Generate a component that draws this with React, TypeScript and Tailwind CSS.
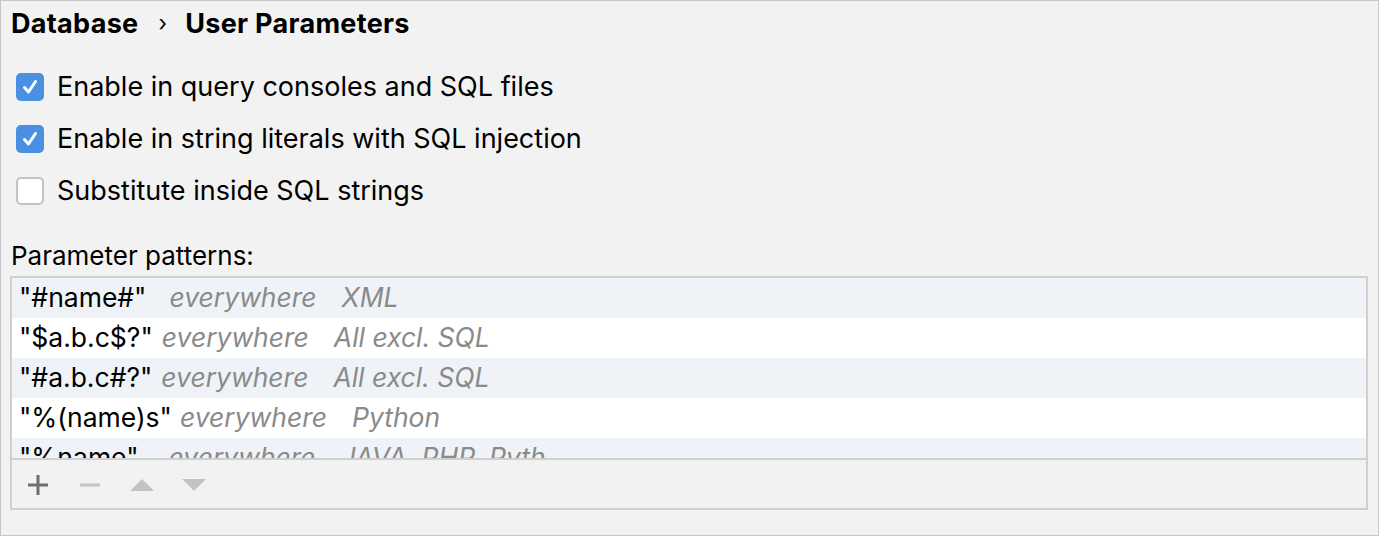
import React from "react";

const rows = [
  { p: '"#name#"', gap: "ml-[23px]", s: "everywhere", l: "XML" },
  { p: '"$a.b.c$?"', gap: "ml-[9px]", s: "everywhere", l: "All excl. SQL" },
  { p: '"#a.b.c#?"', gap: "ml-[9px]", s: "everywhere", l: "All excl. SQL" },
  { p: '"%(name)s"', gap: "ml-[8px]", s: "everywhere", l: "Python" },
  { p: '"%name"', gap: "ml-[30px]", s: "everywhere", l: "JAVA, PHP, Pyth" },
];

function Check({ checked }: { checked: boolean }) {
  if (checked) {
    return (
      <div className="w-[28px] h-[28px] rounded-[5px] bg-[#4a90e2] flex items-center justify-center shrink-0">
        <svg width="18" height="18" viewBox="0 0 18 18">
          <path d="M3.5 9.5 L7.5 14 L14.5 3.5" fill="none" stroke="white" strokeWidth="3" strokeLinecap="round" strokeLinejoin="round" />
        </svg>
      </div>
    );
  }
  return <div className="w-[28px] h-[28px] rounded-[5px] bg-white border-2 border-[#c2c2c2] shrink-0" />;
}

export default function App() {
  return (
    <div
      className="w-[1379px] h-[536px] bg-[#f2f2f2] border border-[#c6c6c6] text-black overflow-hidden"
      style={{ fontFamily: "Inter, 'Noto Sans', sans-serif" }}
    >
      <div className="pl-[10px] pt-[8px] h-[36px] flex items-center text-[27px] font-bold leading-none tracking-[0.3px]">
        <span>Database</span>
        <span className="ml-[20px] mr-[18px] font-normal text-[22px]">›</span>
        <span>User Parameters</span>
      </div>
      <div className="pl-[15px] pt-[36px] flex flex-col gap-[24px] text-[27px] leading-[28px]">
        <div className="flex items-center gap-[13px]">
          <Check checked />
          <span>Enable in query consoles and SQL files</span>
        </div>
        <div className="flex items-center gap-[13px]">
          <Check checked />
          <span>Enable in string literals with SQL injection</span>
        </div>
        <div className="flex items-center gap-[13px]">
          <Check checked={false} />
          <span>Substitute inside SQL strings</span>
        </div>
      </div>
      <div className="pl-[10px] mt-[36px] text-[26px] leading-[30px]">Parameter patterns:</div>
      <div className="ml-[9px] mt-[5px] w-[1358px] h-[234px] border-2 border-[#cfcfcf] flex flex-col">
        <div className="h-[180px] overflow-hidden text-[26.5px]">
          {rows.map((r, i) => (
            <div
              key={i}
              className={
                "h-[40px] flex items-center pl-[7px] whitespace-nowrap " +
                (i % 2 === 0 ? "bg-[#eff3f8]" : "bg-white")
              }
            >
              <span>{r.p}</span>
              <span className={"italic text-[#8a8a8a] " + r.gap}>{r.s}</span>
              <span className="italic text-[#8a8a8a] ml-[25px]">{r.l}</span>
            </div>
          ))}
        </div>
        <div className="flex-1 border-t-2 border-[#cfcfcf] flex items-center pl-[16px] pt-[2px]">
          <svg width="20" height="20" viewBox="0 0 20 20">
            <rect x="8.5" y="0" width="3" height="20" fill="#6e6e6e" />
            <rect x="0" y="8.5" width="20" height="3" fill="#6e6e6e" />
          </svg>
          <svg className="ml-[32px]" width="20" height="20" viewBox="0 0 20 20">
            <rect x="0" y="8.5" width="20" height="3" fill="#c3c3c3" />
          </svg>
          <svg className="ml-[30px]" width="24" height="20" viewBox="0 0 24 20">
            <path d="M0 16 L12 4 L24 16 Z" fill="#c3c3c3" />
          </svg>
          <svg className="ml-[28px]" width="24" height="20" viewBox="0 0 24 20">
            <path d="M0 4 L24 4 L12 16 Z" fill="#c3c3c3" />
          </svg>
        </div>
      </div>
    </div>
  );
}
